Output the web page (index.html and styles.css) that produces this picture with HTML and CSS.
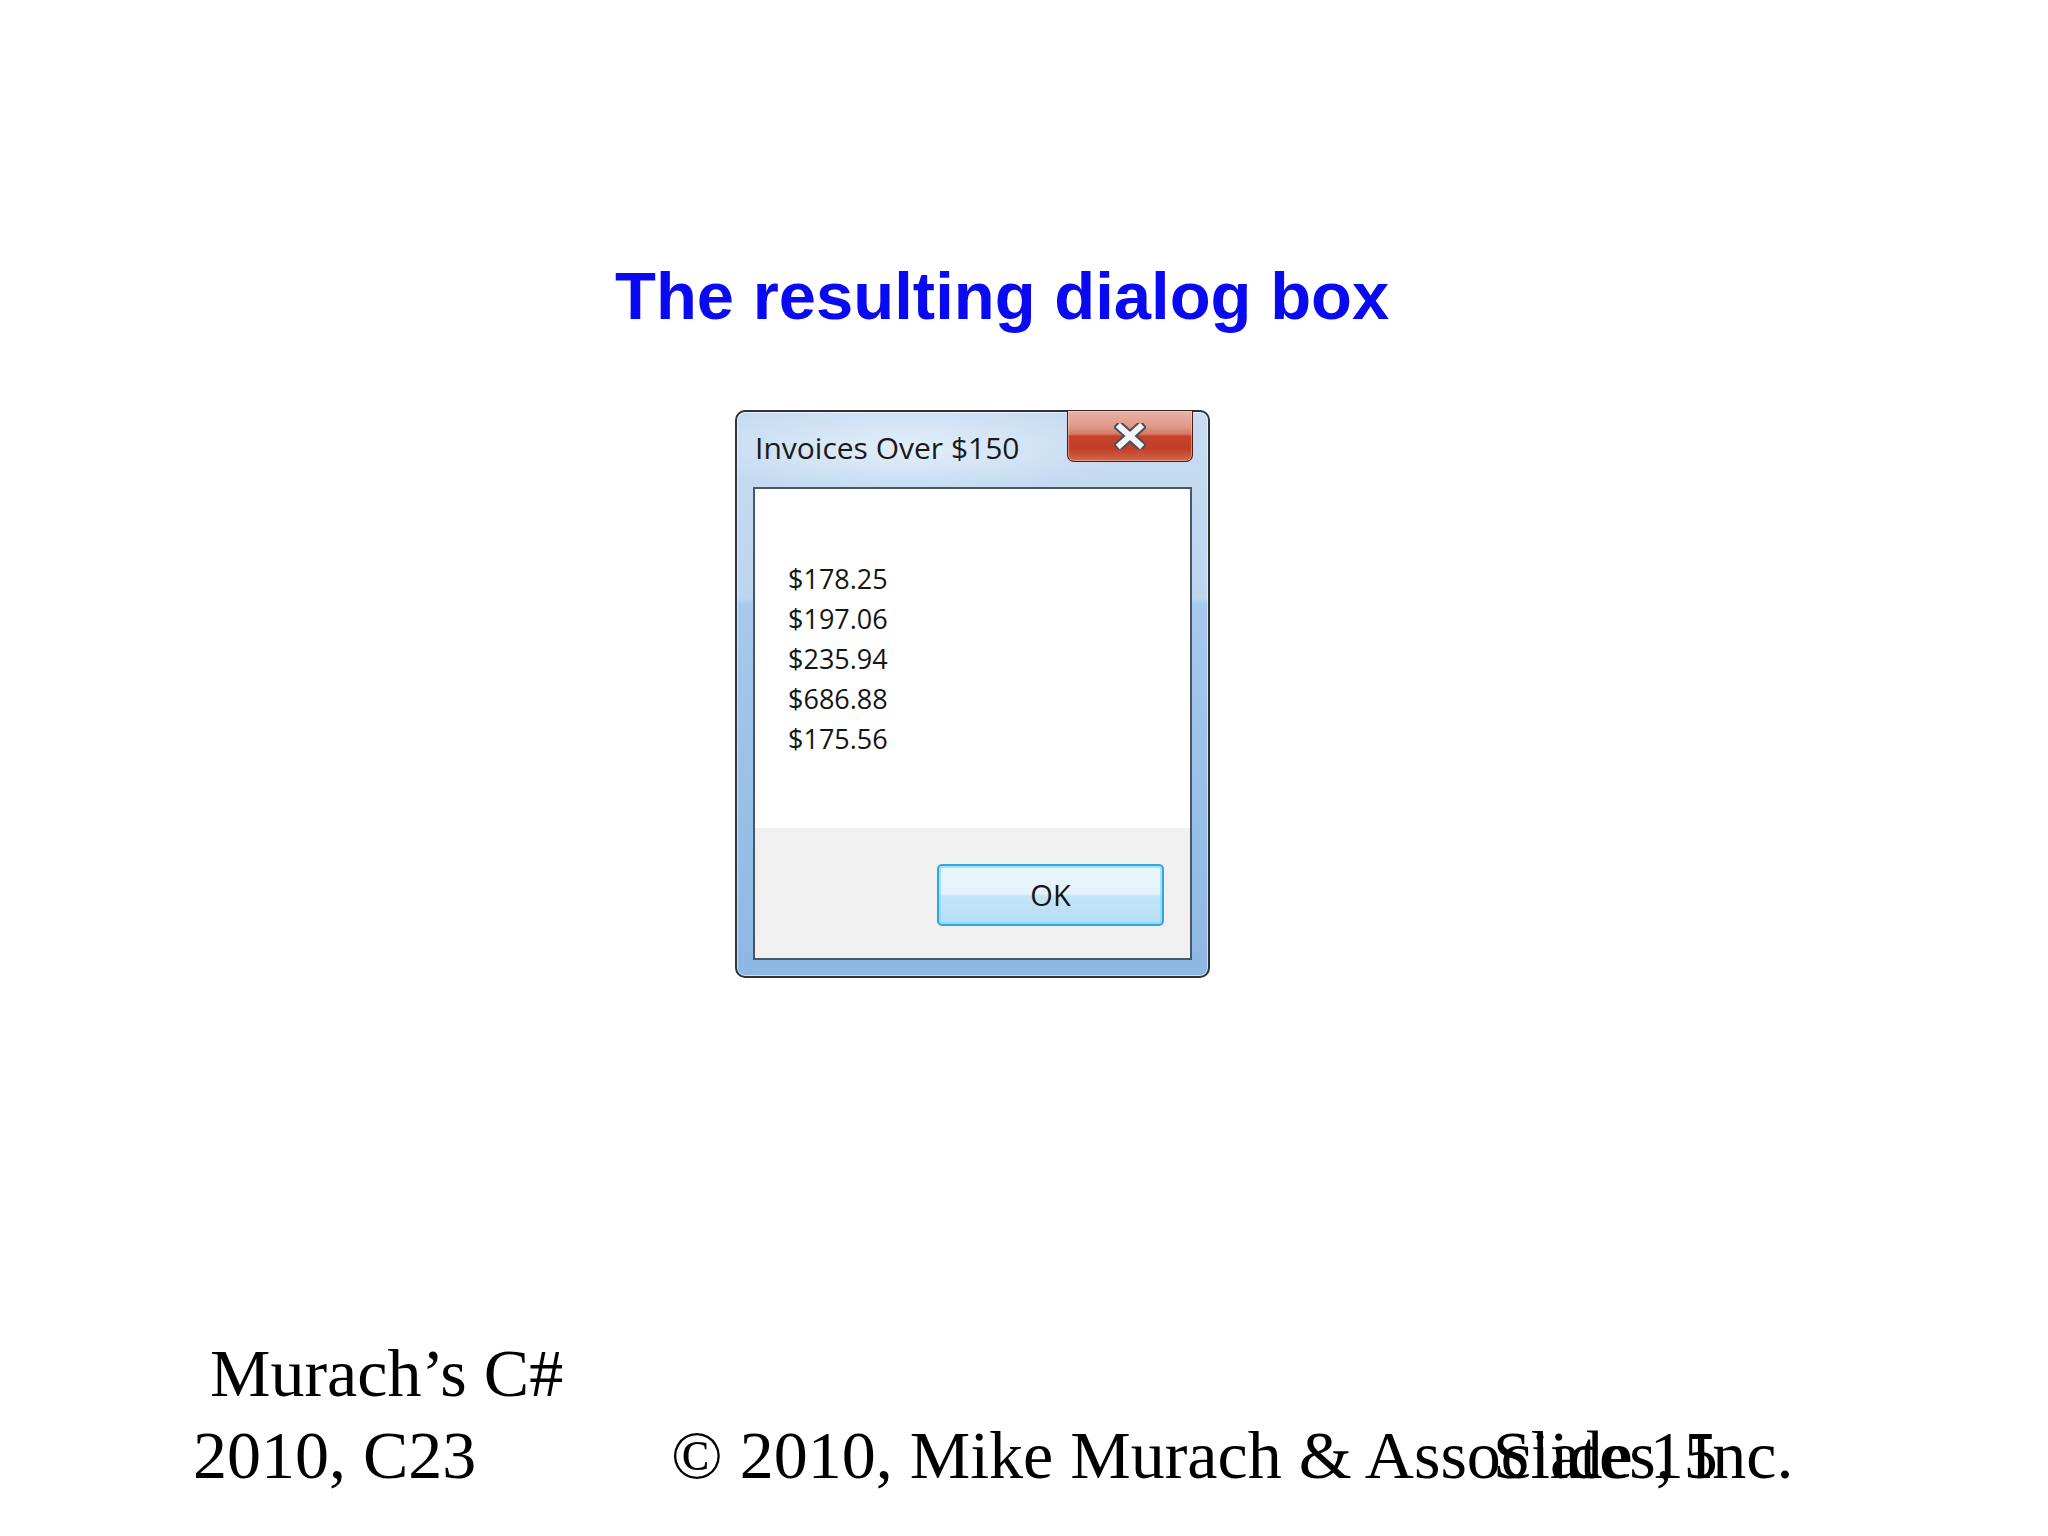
FILE: index.html
```html
<!DOCTYPE html>
<html>
<head>
<meta charset="utf-8">
<title>The resulting dialog box</title>
<link rel="stylesheet" href="styles.css">
</head>
<body>
<div class="slide">
  <h1 class="title">The resulting dialog box</h1>

  <div class="dialog">
    <div class="titlebar">
      <span class="caption">Invoices Over $150</span>
      <div class="close-btn">
        <svg width="32" height="26" viewBox="0 0 32 26">
          <path d="M6 4 L26 22 M26 4 L6 22" stroke="#4a4f55" stroke-width="10" stroke-linecap="square" fill="none"/>
          <path d="M6 4 L26 22 M26 4 L6 22" stroke="#f4f6f8" stroke-width="6" stroke-linecap="square" fill="none"/>
        </svg>
      </div>
    </div>
    <div class="client">
      <div class="message">
        <div>$178.25</div>
        <div>$197.06</div>
        <div>$235.94</div>
        <div>$686.88</div>
        <div>$175.56</div>
      </div>
      <div class="buttons">
        <div class="ok-btn">OK</div>
      </div>
    </div>
  </div>

  <div class="footer">
    <div class="book">
      <div class="book-line indent">Murach’s C#</div>
      <div class="book-line">2010, C23</div>
    </div>
    <div class="copyright">© 2010, Mike Murach &amp; Associates, Inc.</div>
    <div class="slide-no">Slide 15</div>
  </div>
</div>
</body>
</html>
```

FILE: styles.css
```css
html, body {
  margin: 0;
  padding: 0;
  background: #ffffff;
}

.slide {
  width: 2048px;
  height: 1536px;
  position: relative;
  overflow: hidden;
  display: flex;
  flex-direction: column;
}

.title {
  margin: 262px 0 0 615px;
  font-family: "Liberation Sans", Arial, sans-serif;
  font-weight: bold;
  font-size: 67px;
  line-height: 67px;
  color: #0a0af2;
  white-space: nowrap;
}

/* ---------- dialog ---------- */
.dialog {
  margin: 81px 0 0 735px;
  width: 475px;
  height: 568px;
  box-sizing: border-box;
  border: 2px solid #2e3338;
  border-radius: 10px;
  background:
    radial-gradient(ellipse 220px 46px at 170px 36px, rgba(232,242,252,0.85), rgba(232,242,252,0) 100%),
    linear-gradient(to bottom, #c7dcf2 0%, #bdd6ef 33%, #a7c9ed 34%, #95bde7 80%, #8db7e4 100%);
  box-shadow: inset 0 0 0 1px rgba(255,255,255,0.55);
  display: flex;
  flex-direction: column;
  position: relative;
}

.titlebar {
  height: 75px;
  box-sizing: border-box;
  padding: 21px 0 0 18px;
  position: relative;
}

.caption {
  display: block;
  font-family: "Open Sans", "Noto Sans", sans-serif;
  font-size: 30px;
  line-height: 30px;
  color: #1a1a1a;
  white-space: nowrap;
}

.close-btn {
  position: absolute;
  top: -2px;
  right: 15px;
  width: 126px;
  height: 52px;
  box-sizing: border-box;
  border: 1px solid #4c1c14;
  border-top-color: #3a2a28;
  border-radius: 0 0 7px 7px;
  background: linear-gradient(to bottom, #eab2a6 0%, #e09a8a 30%, #d47a66 46%, #c5432b 50%, #c23e26 75%, #d2684e 100%);
  box-shadow: inset 0 0 0 1px rgba(255,220,210,0.45);
  display: flex;
  align-items: center;
  justify-content: center;
}

.close-btn svg {
  display: block;
}

.client {
  margin: 0 16px;
  height: 473px;
  box-sizing: border-box;
  border: 2px solid #4b5663;
  display: flex;
  flex-direction: column;
}

.message {
  height: 339px;
  box-sizing: border-box;
  padding: 70px 0 0 33px;
  background: #ffffff;
  font-family: "Open Sans", "Noto Sans", sans-serif;
  font-size: 27px;
  line-height: 40px;
  color: #151515;
}

.buttons {
  flex: 1;
  background: #f0f0f0;
  display: flex;
  justify-content: flex-end;
  align-items: flex-start;
  padding: 36px 26px 0 0;
}

.ok-btn {
  width: 227px;
  height: 62px;
  box-sizing: border-box;
  border: 2px solid #2fa8dc;
  border-radius: 5px;
  background: linear-gradient(to bottom, #eaf6fd 0%, #e3f2fc 48%, #c3e4f8 52%, #b8def6 100%);
  box-shadow: inset 0 0 0 2px rgba(120,215,250,0.6);
  font-family: "Open Sans", "Noto Sans", sans-serif;
  font-size: 29px;
  line-height: 58px;
  text-align: center;
  color: #151515;
}

/* ---------- footer ---------- */
.footer {
  margin-top: 354px;
  display: flex;
  align-items: flex-end;
  position: relative;
  font-family: "Liberation Serif", "Times New Roman", serif;
  font-size: 68px;
  line-height: 82px;
  color: #000000;
}

.book {
  width: 478px;
  padding-left: 193px;
}

.book-line {
  white-space: nowrap;
}

.indent {
  text-indent: 17px;
}

.copyright {
  white-space: nowrap;
}

.slide-no {
  position: absolute;
  left: 1493px;
  bottom: 0;
  white-space: nowrap;
}
```
